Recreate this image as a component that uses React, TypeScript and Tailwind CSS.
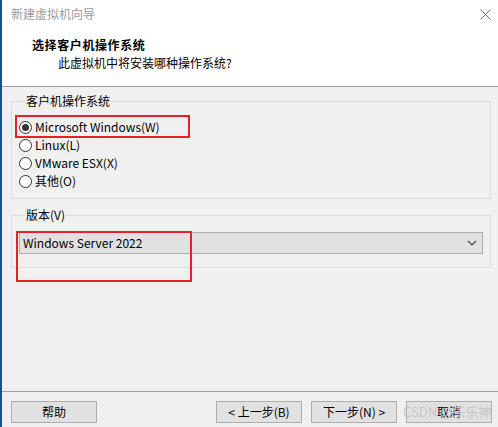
import React from "react";

const font = "font-['Segoe_UI','Noto_Sans_CJK_SC',sans-serif]";

export default function App() {
  return (
    <div className={`w-[498px] h-[427px] flex bg-[#f0f0f0] overflow-hidden relative text-[12px] text-black ${font}`}>
      {/* left edge */}
      <div className="w-[2px] bg-[#1b4f8f]" />

      <div className="flex-1 flex flex-col">
        {/* header */}
        <div className="h-[87px] bg-white border-b border-[#a0a0a0] relative">
          <div className="pt-[6px] pl-[9px] leading-4 text-[#9a9a9a]">新建虚拟机向导</div>
          <CloseIcon />
          <div className="mt-[15px] pl-[30px] leading-4 font-bold tracking-[0.6px]">选择客户机操作系统</div>
          <div className="mt-[2px] pl-[56px] leading-4">此虚拟机中将安装哪种操作系统?</div>
        </div>

        {/* guest os */}
        <fieldset className="mt-[6px] ml-[9px] w-[480px] border border-[#dcdcdc] px-[7px] pb-[8px]">
          <legend className="ml-[6px] px-[1px] leading-4">客户机操作系统</legend>
          <div className="pt-[9px] flex flex-col">
            <RadioRow label="Microsoft Windows(W)" checked mark />
            <RadioRow label="Linux(L)" />
            <RadioRow label="VMware ESX(X)" />
            <RadioRow label="其他(O)" />
          </div>
        </fieldset>

        {/* version */}
        <fieldset className="mt-[8px] ml-[9px] w-[480px] border border-[#dcdcdc] px-[7px] pb-[13px]">
          <legend className="ml-[6px] px-[1px] leading-4">版本(V)</legend>
          <div className="mt-[9px] relative h-[22px] bg-[#e1e1e1] border border-[#adadad] flex items-center pl-[3px] pr-[5px]">
            <span className="flex-1 leading-4">Windows Server 2022</span>
            <svg width="10" height="6" viewBox="0 0 10 6" className="text-[#444]">
              <path d="M1 1 L5 5 L9 1" fill="none" stroke="currentColor" strokeWidth="1.2" />
            </svg>
            <div className="absolute left-[-4px] top-[-2px] w-[176px] h-[51px] border-2 border-[#e5202a]" />
          </div>
        </fieldset>

        {/* footer */}
        <div className="mt-auto border-t border-[#a0a0a0] pt-[9px] pb-[4px] pl-[9px] pr-[6px] flex">
          <Btn>帮助</Btn>
          <div className="flex-1" />
          <div className="flex gap-[9px]">
            <Btn>&lt; 上一步(B)</Btn>
            <Btn>下一步(N) &gt;</Btn>
            <Btn>取消</Btn>
          </div>
        </div>
      </div>

      {/* watermark */}
      <div className="absolute left-[403px] top-[404px] whitespace-nowrap text-[13px] leading-[16px] text-[#c4c4c4]/90 pointer-events-none">
        CSDN @乐乐神
      </div>
    </div>
  );
}

function CloseIcon() {
  return (
    <svg width="11" height="11" viewBox="0 0 11 11" className="absolute left-[478px] top-[9px] text-[#6e6e6e]">
      <path d="M0.5 0.5 L10.5 10.5 M10.5 0.5 L0.5 10.5" stroke="currentColor" strokeWidth="1" />
    </svg>
  );
}

function RadioRow({ label, checked, mark }: { label: string; checked?: boolean; mark?: boolean }) {
  return (
    <div className="relative h-[18px] flex items-center gap-[3px]">
      <span className="w-[13px] h-[13px] rounded-full border border-[#333] bg-white flex items-center justify-center">
        {checked && <span className="w-[7px] h-[7px] rounded-full bg-[#333]" />}
      </span>
      <span className="leading-4">{label}</span>
      {mark && <div className="absolute left-[-4px] top-[-3px] w-[175px] h-[23px] border-2 border-[#e5202a]" />}
    </div>
  );
}

function Btn({ children }: { children: React.ReactNode }) {
  return (
    <div className="w-[86px] h-[22px] bg-[#e1e1e1] border border-[#adadad] flex items-center justify-center leading-4">
      {children}
    </div>
  );
}
